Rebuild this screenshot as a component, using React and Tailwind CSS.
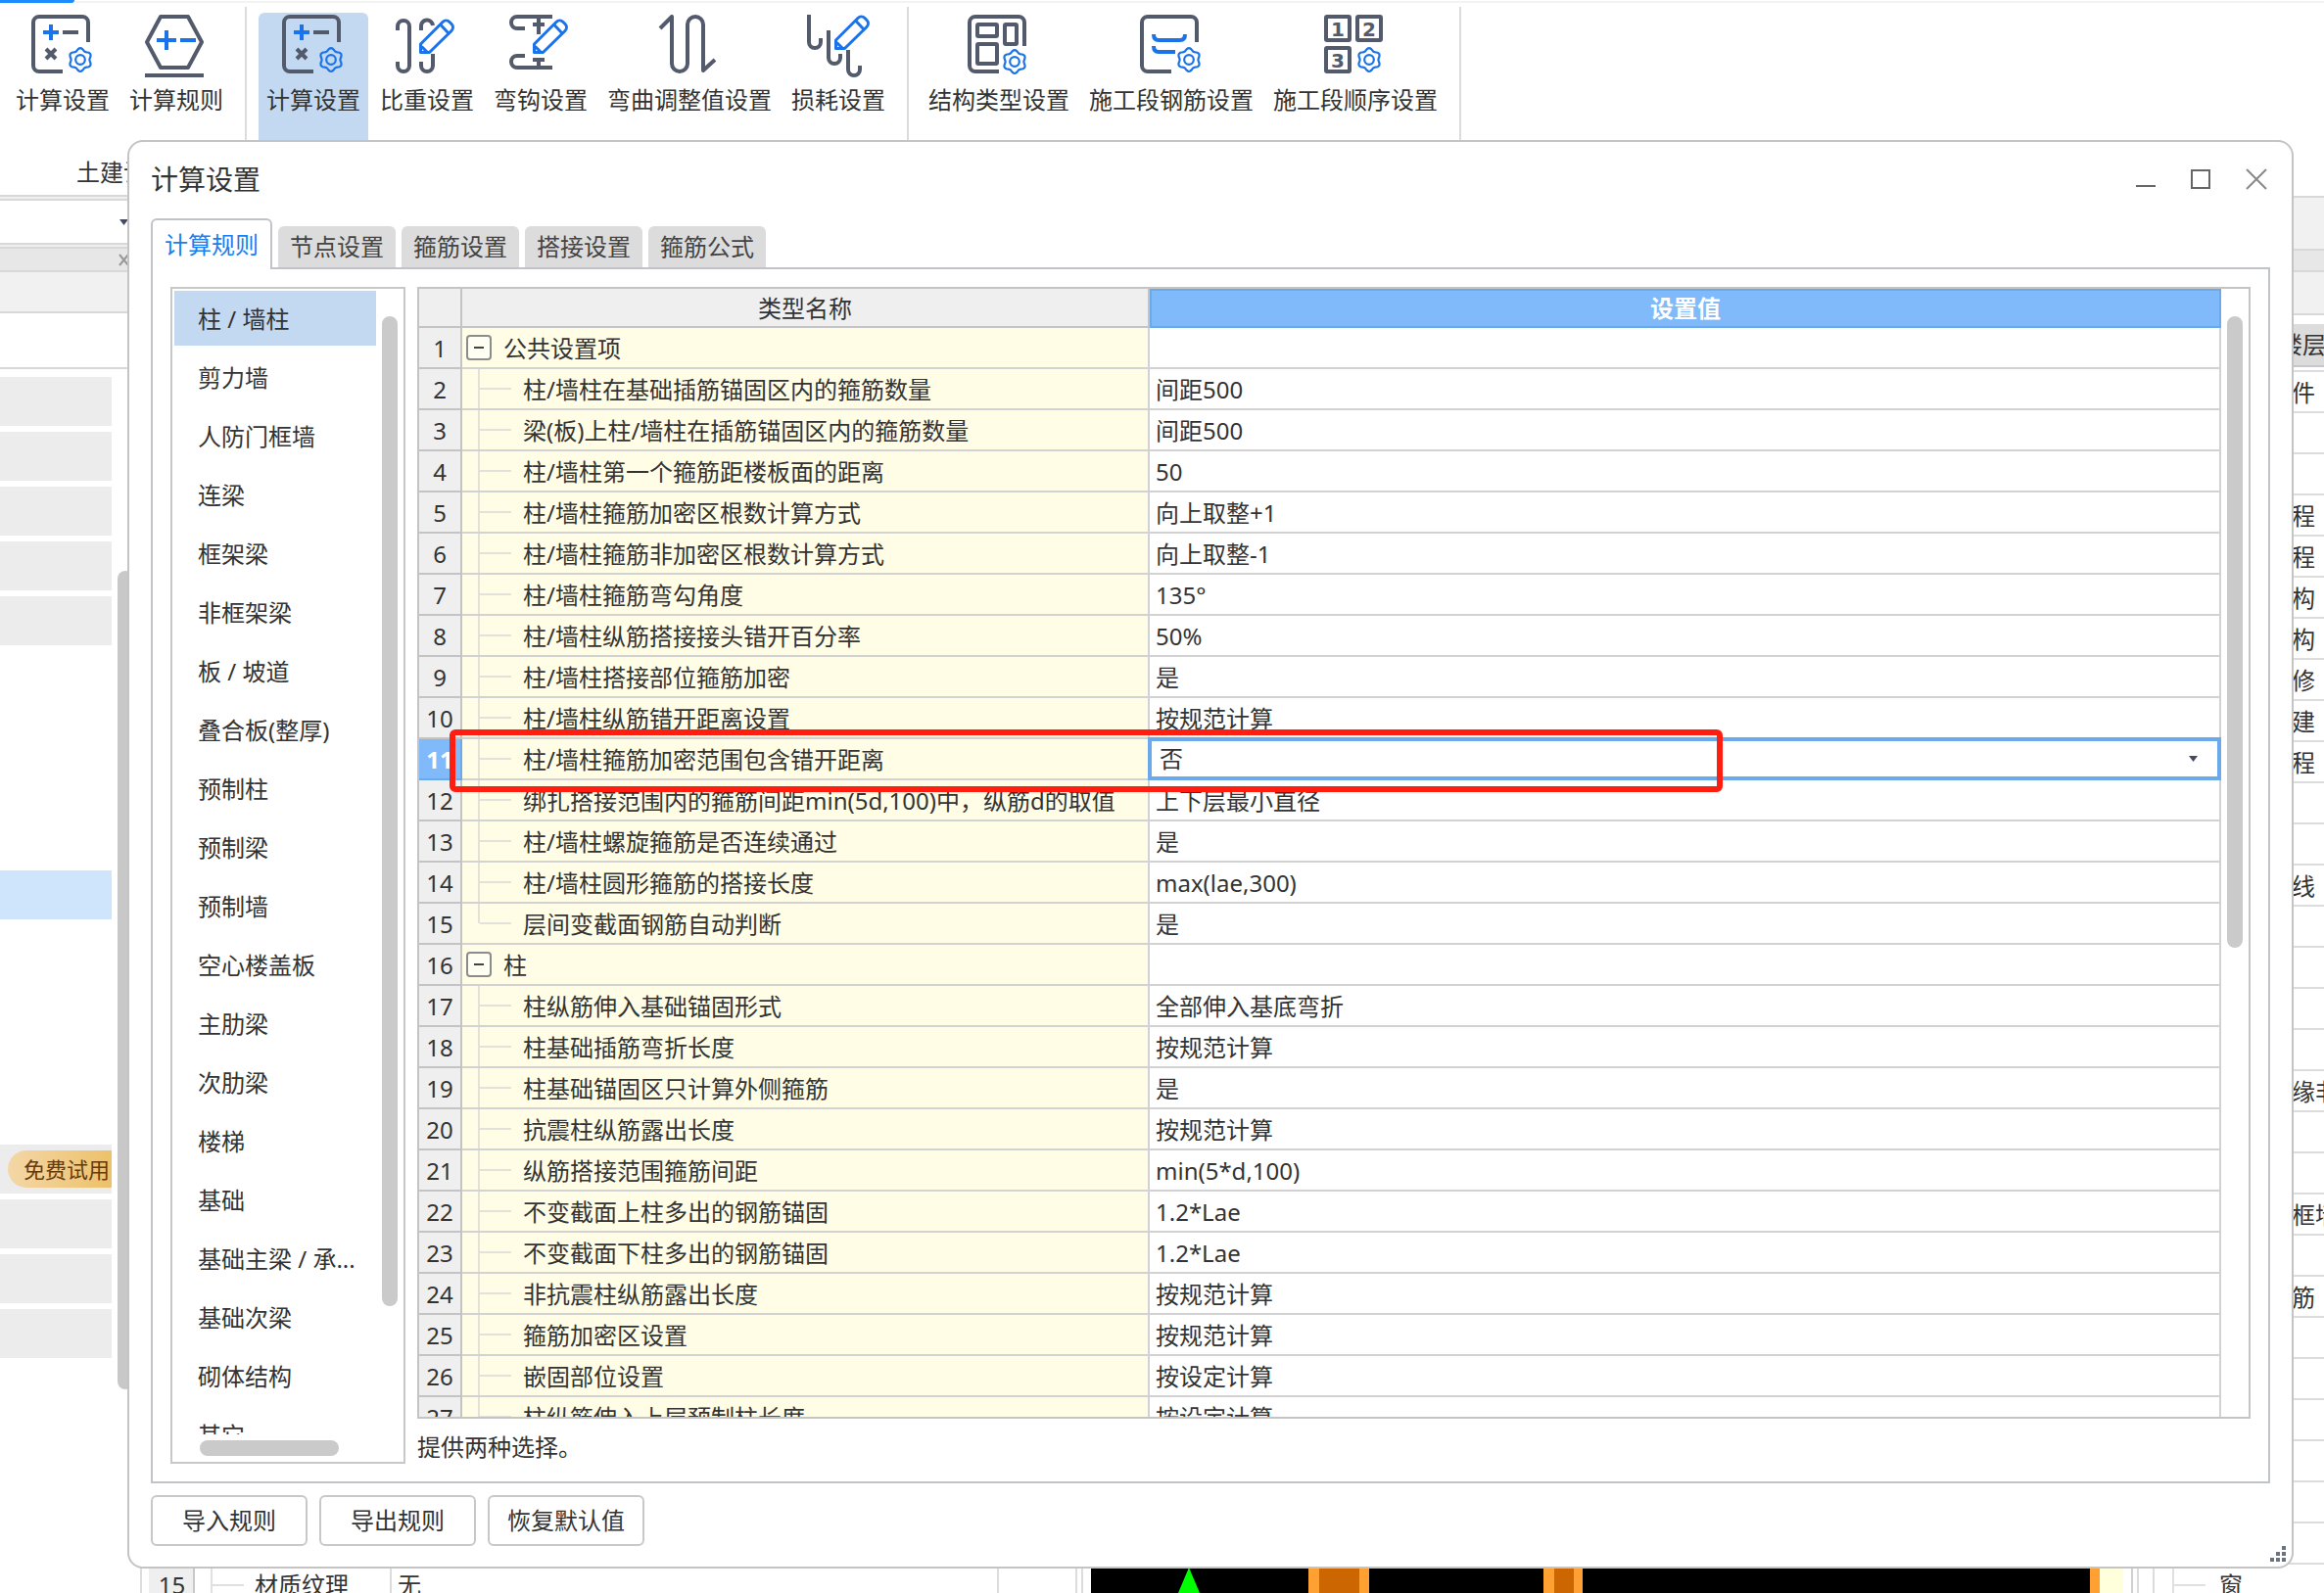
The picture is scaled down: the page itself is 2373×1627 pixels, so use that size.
import React, { useState } from 'react';
import { clsx } from 'clsx';

const SLATE = '#525a6b';
const BLUE = '#1a73e8';

const TABS = ['计算规则', '节点设置', '箍筋设置', '搭接设置', '箍筋公式'];

const COMPONENTS = [
  '柱 / 墙柱', '剪力墙', '人防门框墙', '连梁', '框架梁', '非框架梁', '板 / 坡道', '叠合板(整厚)', '预制柱', '预制梁',
  '预制墙', '空心楼盖板', '主肋梁', '次肋梁', '楼梯', '基础', '基础主梁 / 承...', '基础次梁', '砌体结构', '其它',
];

const ROWS = [
  { name: '公共设置项', group: true },
  { name: '柱/墙柱在基础插筋锚固区内的箍筋数量', value: '间距500' },
  { name: '梁(板)上柱/墙柱在插筋锚固区内的箍筋数量', value: '间距500' },
  { name: '柱/墙柱第一个箍筋距楼板面的距离', value: '50' },
  { name: '柱/墙柱箍筋加密区根数计算方式', value: '向上取整+1' },
  { name: '柱/墙柱箍筋非加密区根数计算方式', value: '向上取整-1' },
  { name: '柱/墙柱箍筋弯勾角度', value: '135°' },
  { name: '柱/墙柱纵筋搭接接头错开百分率', value: '50%' },
  { name: '柱/墙柱搭接部位箍筋加密', value: '是' },
  { name: '柱/墙柱纵筋错开距离设置', value: '按规范计算' },
  { name: '柱/墙柱箍筋加密范围包含错开距离', value: '否', active: true },
  { name: '绑扎搭接范围内的箍筋间距min(5d,100)中，纵筋d的取值', value: '上下层最小直径' },
  { name: '柱/墙柱螺旋箍筋是否连续通过', value: '是' },
  { name: '柱/墙柱圆形箍筋的搭接长度', value: 'max(lae,300)' },
  { name: '层间变截面钢筋自动判断', value: '是', last: true },
  { name: '柱', group: true },
  { name: '柱纵筋伸入基础锚固形式', value: '全部伸入基底弯折' },
  { name: '柱基础插筋弯折长度', value: '按规范计算' },
  { name: '柱基础锚固区只计算外侧箍筋', value: '是' },
  { name: '抗震柱纵筋露出长度', value: '按规范计算' },
  { name: '纵筋搭接范围箍筋间距', value: 'min(5*d,100)' },
  { name: '不变截面上柱多出的钢筋锚固', value: '1.2*Lae' },
  { name: '不变截面下柱多出的钢筋锚固', value: '1.2*Lae' },
  { name: '非抗震柱纵筋露出长度', value: '按规范计算' },
  { name: '箍筋加密区设置', value: '按规范计算' },
  { name: '嵌固部位设置', value: '按设定计算' },
  { name: '柱纵筋伸入上层预制柱长度', value: '按设定计算' },
];

// 右侧构件树，只露出边缘文字
const TREE_ROWS = [
  '件', '', '', '程', '程', '构', '构', '修', '建', '程', '', '', '线', '', '', '', '',
  '缘非', '', '', '框墙', '', '筋', '', '', '', '', '', '',
];

// 六瓣齿轮轮廓
const gearPath = (cx, cy) => {
  const pts = [];
  for (let i = 0; i < 72; i += 1) {
    const a = (i / 72) * Math.PI * 2;
    const r = 10.6 + 1.2 * Math.cos(6 * (a - Math.PI / 2));
    pts.push(`${(cx + r * Math.cos(a)).toFixed(2)} ${(cy + r * Math.sin(a)).toFixed(2)}`);
  }
  return `M${pts.join('L')}Z`;
};

const Gear = ({ cx, cy }) => (
  <g stroke={BLUE} strokeWidth="2.2">
    <path d={gearPath(cx, cy)} />
    <circle cx={cx} cy={cy} r="4.8" />
  </g>
);

const Pencil = ({ dx = 0, dy = 0 }) => (
  <g transform={`translate(${dx} ${dy})`} stroke={BLUE} strokeWidth="3" strokeLinejoin="round">
    <path d="M25.5 38.5V30L48 7.500a5 5 0 0 1 7 0l2 2a5 5 0 0 1 0 7L34.500 38.500z" fill="#fff" />
    <path d="M46 10.500l8 8.500M26.500 32.500l6 6" />
  </g>
);

const Icon = ({ children }) => (
  <svg width="64" height="64" viewBox="0 0 64 64" fill="none" stroke={SLATE} strokeWidth="4" aria-hidden="true">
    {children}
  </svg>
);

const CalcIcon = () => (
  <Icon>
    <path d="M32 58H8a6 6 0 0 1-6-6V8a6 6 0 0 1 6-6h44a6 6 0 0 1 6 6v20" />
    <path d="M12 18h16M20 10v16" stroke={BLUE} />
    <path d="M32 18h16M15 35l10 10M25 35L15 45" />
    <Gear cx={50} cy={46} />
  </Icon>
);

const RuleIcon = () => (
  <Icon>
    <path d="M16 2h28l14 26-14 26H16L2 28z" strokeLinejoin="round" />
    <path d="M12 26h20M22 16v20M36 26h16" stroke={BLUE} />
    <path d="M0 62h60" />
  </Icon>
);

const WeightIcon = () => (
  <Icon>
    <path d="M2 16v-4a6 6 0 0 1 12 0v40a6 6 0 0 1-12 0v-4" />
    <path d="M26 16v-4a6 6 0 0 1 12-1M38 40v12a6 6 0 0 1-12 0v-4" />
    <Pencil />
  </Icon>
);

const HookIcon = () => (
  <Icon>
    <path d="M44 2H8a6 6 0 0 0 0 12h8M24 10h12M30 2v18" />
    <path d="M16 42H8a6 6 0 0 0 0 12h36M24 46h12M30 46v8" />
    <Pencil />
  </Icon>
);

const BendIcon = () => (
  <Icon>
    <path d="M2 14L14 2v48a8 8 0 0 0 16 0V10a8 8 0 0 1 16 0v47l12-11" strokeLinejoin="round" />
  </Icon>
);

const LossIcon = () => (
  <Icon>
    <path d="M2 0v28a6 6 0 0 0 12 0v-4M22 16v28a6 6 0 0 0 12 0v-4M42 36v20a6 6 0 0 0 12 0v-4" />
    <Pencil dx={4} dy={-4} />
  </Icon>
);

const StructIcon = () => (
  <Icon>
    <path d="M32 58H8a6 6 0 0 1-6-6V8a6 6 0 0 1 6-6h44a6 6 0 0 1 6 6v24" />
    <rect x="10" y="10" width="20" height="12" rx="1" />
    <rect x="38" y="10" width="12" height="20" rx="1" />
    <rect x="10" y="30" width="20" height="20" rx="1" />
    <Gear cx={48} cy={48} />
  </Icon>
);

const SectionBarIcon = () => (
  <Icon>
    <path d="M32 58H8a6 6 0 0 1-6-6V8a6 6 0 0 1 6-6h44a6 6 0 0 1 6 6v20" />
    <path d="M14 20c0 4 2 6 5 6h22c3 0 5-2 5-6M14 32c0 4 2 6 5 6h17" stroke={BLUE} />
    <Gear cx={50} cy={46} />
  </Icon>
);

const SectionOrderIcon = () => (
  <Icon>
    <rect x="2" y="2" width="24" height="24" rx="1" />
    <rect x="34" y="2" width="24" height="24" rx="1" />
    <rect x="2" y="34" width="24" height="24" rx="1" />
    <g fill={SLATE} stroke="none" fontFamily="DejaVu Sans" fontSize="20" fontWeight="bold" textAnchor="middle">
      <text x="14" y="22">1</text>
      <text x="46" y="22">2</text>
      <text x="14" y="54">3</text>
    </g>
    <Gear cx={46} cy={46} />
  </Icon>
);

const TOOL_GROUPS = [
  {
    caption: '土建设置',
    className: 'pl-2 pr-[14px]',
    tools: [{ label: '计算设置', icon: CalcIcon }, { label: '计算规则', icon: RuleIcon }],
  },
  {
    caption: '钢筋设置',
    className: 'pl-3 pr-[14px]',
    tools: [
      { label: '计算设置', icon: CalcIcon, active: true },
      { label: '比重设置', icon: WeightIcon },
      { label: '弯钩设置', icon: HookIcon },
      { label: '弯曲调整值设置', icon: BendIcon },
      { label: '损耗设置', icon: LossIcon },
    ],
  },
  {
    caption: '其它设置',
    className: 'pl-3 pr-[14px]',
    tools: [
      { label: '结构类型设置', icon: StructIcon },
      { label: '施工段钢筋设置', icon: SectionBarIcon },
      { label: '施工段顺序设置', icon: SectionOrderIcon },
    ],
  },
];

const Ribbon = () => (
  <header className="flex h-[199px] shrink-0 flex-col">
    <div className="flex h-[3px]">
      <div className="w-[76px] rounded-br bg-[#1a8cff]" />
      <div className="flex-1 border-b-2 border-[#f3f3f3]" />
    </div>
    <div className="flex flex-1 pt-1">
      {TOOL_GROUPS.map((group) => (
        <section key={group.caption} className={clsx('flex flex-col border-r-2 border-[#dcdcdc] pt-[6px]', group.className)}>
          <div className="flex gap-1">
            {group.tools.map(({ label, icon: ToolIcon, active }) => (
              <button
                key={label}
                type="button"
                className={clsx('flex h-36 flex-col items-center rounded-md px-2 pt-[2px]', active && 'bg-[#c2d9f1]')}
              >
                <ToolIcon />
                <span className="mt-[7px] whitespace-nowrap leading-8">{label}</span>
              </button>
            ))}
          </div>
          <p className="pl-2 text-center leading-[38px]">{group.caption}</p>
        </section>
      ))}
    </div>
  </header>
);

const LeftDock = () => (
  <aside className="flex w-[143px] shrink-0 flex-col">
    <div className="h-[6px] shrink-0 border-y-2 border-[#d8d8d8] bg-[#f0f0f0]" />
    <div className="flex h-[43px] shrink-0 items-center justify-end pr-3">
      <svg width="9" height="6" aria-hidden="true"><path d="M0 0h9L4.500 6z" fill="#444c5c" /></svg>
    </div>
    <div className="h-[6px] shrink-0 border-y-2 border-[#d8d8d8] bg-[#f0f0f0]" />
    <div className="flex h-[22px] shrink-0 items-center justify-end bg-[#e7e7e7] pr-[11px]">
      <svg width="11" height="13" stroke="#999" strokeWidth="2" aria-hidden="true"><path d="M1 1l9 11M10 1L1 12" /></svg>
    </div>
    <div className="h-[44px] shrink-0 border-y-2 border-[#d8d8d8] bg-[#f1f1f1]" />
    <div className="h-[57px] shrink-0 border-b-2 border-[#d8d8d8]" />
    <div className="flex gap-[6px]">
      <ul className="flex w-[114px] flex-col gap-[6px] pt-2">
        {Array.from({ length: 18 }, (_, i) => (
          <li
            key={i}
            className={clsx(
              'flex h-[50px] shrink-0 items-center overflow-hidden',
              (i < 5 || i > 13) && 'bg-[#ececec]',
              i === 9 && 'bg-[#cfe5fc]',
            )}
          >
            {i === 14 && (
              <span className="ml-2 w-full rounded-l-full bg-linear-to-r from-[#f4d7a6] to-[#edc169] pl-4 text-[22px] leading-[38px] whitespace-nowrap text-[#663a0a]">
                免费试用
              </span>
            )}
          </li>
        ))}
      </ul>
      <div className="mt-[206px] h-[836px] w-4 rounded-full bg-[#c8c8c8]" />
    </div>
  </aside>
);

const PropertyDock = () => (
  <section className="flex w-[963px] shrink-0 flex-col justify-end border-x-2 border-[#dcdcdc]">
    <div className="h-[29px] overflow-hidden">
      <div className="mr-1 ml-[7px] flex h-[42px] items-center border-r-2 border-[#dcdcdc]">
        <span className="w-[47px] self-stretch border-r-2 border-[#c8c8c8] bg-[#efefef] pl-[2px] text-center leading-[42px]">15</span>
        <span className="ml-4 flex self-stretch border-l-2 border-[#e0e0e0]"><i className="w-8 self-center border-t-2 border-[#e0e0e0]" /></span>
        <span className="w-[149px] pl-[11px]">材质纹理</span>
        <span className="flex-1 border-l-2 border-[#dcdcdc] pl-[6px] leading-[42px]">无</span>
        <span className="w-[80px] self-stretch border-l-2 border-[#dcdcdc]" />
      </div>
    </div>
  </section>
);

const DrawingView = () => (
  <section className="ml-2 flex min-w-0 flex-1 flex-col justify-end">
    <div className="flex h-[29px] bg-black">
      <svg className="h-full flex-1" aria-hidden="true">
        <path d="M100 3L111 29H89z" fill="#00ff00" />
        <rect x="222" width="62" height="29" fill="#ffa033" />
        <rect x="233" width="41" height="29" fill="#cc6600" />
        <rect x="462" width="40" height="29" fill="#ffa033" />
        <rect x="473" width="20" height="29" fill="#cc6600" />
      </svg>
      <span className="w-[10px] bg-[#ffa033]" />
      <span className="w-6 bg-[#ffffdc]" />
    </div>
  </section>
);

const RightDock = () => (
  <aside className="ml-2 flex w-[197px] shrink-0 flex-col border-l-2 border-[#d0d0d0] pt-px">
    <div className="h-[54px] shrink-0 border-t-2 border-[#d8d8d8] bg-[#f1f1f1]" />
    <div className="h-[22px] shrink-0 border-t-2 border-[#d8d8d8] bg-[#e7e7e7]" />
    <div className="h-[46px] shrink-0 border-y-2 border-[#d8d8d8] bg-[#f1f1f1]" />
    <div className="mt-[9px] h-[44px] shrink-0 overflow-hidden border-b-2 border-[#c4c8cc] bg-[#dcdcdc] pl-[149px] leading-[42px] whitespace-nowrap">楼层</div>
    <div className="ml-1 shrink-0 border-l-2 border-[#dcdcdc] pt-[3px] pl-[14px]">
      <div className="border-l-2 border-[#dcdcdc]">
        <div className="border-t-2 border-[#dcdcdc]" />
        {TREE_ROWS.map((text, i) => (
          <div key={i} className="h-[42px] overflow-hidden border-b-2 border-[#dcdcdc] pl-[140px] leading-[42px] whitespace-nowrap">
            {text}
          </div>
        ))}
        <div className="ml-[18px] flex h-[42px] items-center">
          <span className="flex self-stretch border-l-2 border-[#e0e0e0]"><i className="w-8 self-center border-t-2 border-[#e0e0e0]" /></span>
          <span className="pl-[14px]">窗</span>
        </div>
      </div>
    </div>
  </aside>
);

const TitleBar = () => (
  <div className="flex h-[78px] shrink-0 items-center justify-between pb-[3px]">
    <h1 className="text-[28px] leading-9">计算设置</h1>
    <div className="mr-[3px] flex items-center gap-9">
      <button type="button" aria-label="最小化">
        <svg width="20" height="22" stroke="#666" strokeWidth="2" fill="none"><path d="M0 18h20" /></svg>
      </button>
      <button type="button" aria-label="最大化">
        <svg width="20" height="22" stroke="#666" strokeWidth="2" fill="none"><path d="M1 2h18v18H1z" /></svg>
      </button>
      <button type="button" aria-label="关闭">
        <svg width="22" height="22" stroke="#888" strokeWidth="2" fill="none"><path d="M1 1l20 20M21 1L1 21" /></svg>
      </button>
    </div>
  </div>
);

const ComponentList = ({ selected, onSelect }) => (
  <nav className="flex w-[240px] shrink-0 flex-col border-2 border-[#c8c8c8] pb-[6px]">
    <div className="flex min-h-0 flex-1 justify-between pr-[6px] pl-[2px]">
      <ul className="mb-[6px] flex w-[206px] flex-col gap-1 overflow-hidden pt-[2px]">
        {COMPONENTS.map((name) => (
          <li key={name} className="shrink-0">
            <button
              type="button"
              onClick={() => onSelect(name)}
              className={clsx('h-14 w-full pt-[2px] pl-6 text-left whitespace-nowrap', name === selected && 'bg-[#c2d9f1]')}
            >
              {name}
            </button>
          </li>
        ))}
      </ul>
      <div className="mt-7 mb-[137px] w-4 rounded-full bg-[#cacaca]" />
    </div>
    <div className="ml-7 h-4 w-[142px] shrink-0 rounded-full bg-[#cacaca]" />
  </nav>
);

const NameCell = ({ row }) => {
  if (row.group) {
    return (
      <div className="flex h-10 items-center">
        <button type="button" aria-label="折叠" className="ml-1 flex size-[26px] items-center justify-center rounded-sm border-2 border-[#8c8c8c] bg-white/50">
          <span className="w-[10px] border-t-2 border-[#444]" />
        </button>
        <span className="ml-3 pt-[2px]">{row.name}</span>
      </div>
    );
  }
  return (
    <div className="flex h-10 items-center pl-4">
      <span className={clsx('border-l-2 border-[#e2e2da]', row.last ? 'h-5 self-start' : 'h-full')} />
      <span className="w-8 border-t-2 border-[#e2e2da]" />
      <span className="ml-3 pt-[2px] whitespace-nowrap">{row.name}</span>
    </div>
  );
};

const SettingsTable = () => (
  <div className="relative flex min-h-0 flex-1 border-2 border-[#c4c4c4]">
    <div className="min-w-0 flex-1 overflow-hidden">
      <table className="w-full table-fixed border-separate border-spacing-0">
        <colgroup>
          <col className="w-[44px]" />
          <col className="w-[702px]" />
          <col />
        </colgroup>
        <thead>
          <tr className="h-10">
            <th aria-label="序号" className="border-r-2 border-b-2 border-[#c4c4c4] bg-[#efefef] p-0" />
            <th className="border-r-2 border-b-2 border-[#c4c4c4] bg-[#efefef] p-0 pt-[2px] leading-9 font-normal">类型名称</th>
            <th className="border-2 border-[#6aaaea] bg-[#80bafa] p-0 leading-9 font-bold text-white">设置值</th>
          </tr>
        </thead>
        <tbody>
          {ROWS.map((row, i) => (
            <tr key={i} className="h-[42px]">
              <td
                className={clsx(
                  'border-r-2 border-b-2 p-0 pt-[2px] text-center leading-[38px]',
                  row.active ? 'border-[#6aaaea] bg-[#80bafa] font-bold text-white' : 'border-[#c4c4c4] bg-[#efefef]',
                )}
              >
                {i + 1}
              </td>
              <td className="border-r-2 border-b-2 border-[#d2d2d2] bg-[#fffde6] p-0">
                <NameCell row={row} />
              </td>
              <td className="border-r-2 border-b-2 border-[#d2d2d2] p-0">
                {row.active ? (
                  <div className="grid h-10 items-center outline-4 -outline-offset-2 outline-[#6aaaea]">
                    <select
                      aria-label={row.name}
                      defaultValue={row.value}
                      className="col-start-1 row-start-1 h-9 w-full appearance-none pl-[10px] outline-none"
                    >
                      <option>否</option>
                      <option>是</option>
                    </select>
                    <svg className="pointer-events-none col-start-1 row-start-1 mr-[22px] justify-self-end" width="9" height="6" aria-hidden="true">
                      <path d="M0 0h9L4.500 6z" fill="#444c5c" />
                    </svg>
                  </div>
                ) : (
                  <div className="h-10 pt-[2px] pl-[6px] leading-[38px]">{row.value}</div>
                )}
              </td>
            </tr>
          ))}
        </tbody>
      </table>
    </div>
    <div className="w-7 shrink-0 px-[6px]">
      <div className="mt-7 h-[56%] rounded-full bg-[#cacaca]" />
    </div>
    {/* 红色标注框 */}
    <div className="pointer-events-none absolute top-[450px] left-[31px] h-16 w-[1300px] rounded-md border-[6px] border-[#ff1e10]" />
  </div>
);

const SettingsDialog = () => {
  const [tab, setTab] = useState(TABS[0]);
  const [selected, setSelected] = useState(COMPONENTS[0]);

  return (
    <div
      role="dialog"
      aria-label="计算设置"
      className="absolute top-[143px] right-[31px] bottom-[25px] left-[130px] flex flex-col rounded-2xl border-2 border-[#c4c4c4] bg-white px-[22px] pb-[21px]"
    >
      <TitleBar />
      <div role="tablist" className="relative flex h-[50px] shrink-0 items-end gap-[6px]">
        {TABS.map((name) => (
          <button
            key={name}
            type="button"
            role="tab"
            aria-selected={name === tab}
            onClick={() => setTab(name)}
            className={
              name === tab
                ? '-mb-[2px] h-[52px] w-[124px] rounded-t-md border-2 border-b-0 border-[#c0c4c8] bg-white text-[#1a7ef0]'
                : 'h-[42px] w-[120px] rounded-t-md bg-[#dcdcdc] text-[#444]'
            }
          >
            {name}
          </button>
        ))}
      </div>
      <div className="flex min-h-0 flex-1 gap-3 border-2 border-[#c0c4c8] p-[18px]">
        <ComponentList selected={selected} onSelect={setSelected} />
        <div className="flex min-w-0 flex-1 flex-col">
          <SettingsTable />
          <p className="h-[46px] shrink-0 pt-3 leading-[34px]">提供两种选择。</p>
        </div>
      </div>
      <div className="mt-3 flex shrink-0 gap-3">
        {['导入规则', '导出规则', '恢复默认值'].map((label) => (
          <button key={label} type="button" className="h-[52px] w-[160px] rounded-md border-2 border-[#c8c8c8] bg-white">
            {label}
          </button>
        ))}
      </div>
      <svg className="absolute right-[6px] bottom-[5px]" width="16" height="16" fill="#6b7280" aria-hidden="true">
        <path d="M12 0h4v4h-4zM6 6h4v4H6zM12 6h4v4h-4zM0 12h4v4H0zM6 12h4v4H6zM12 12h4v4h-4z" />
      </svg>
    </div>
  );
};

export default function App() {
  return (
    <div className="relative flex h-screen flex-col overflow-hidden bg-white font-['Noto_Sans','Noto_Sans_CJK_SC',sans-serif] text-2xl text-[#333]">
      <Ribbon />
      <main className="flex min-h-0 flex-1">
        <LeftDock />
        <PropertyDock />
        <DrawingView />
        <RightDock />
      </main>
      <SettingsDialog />
    </div>
  );
}
